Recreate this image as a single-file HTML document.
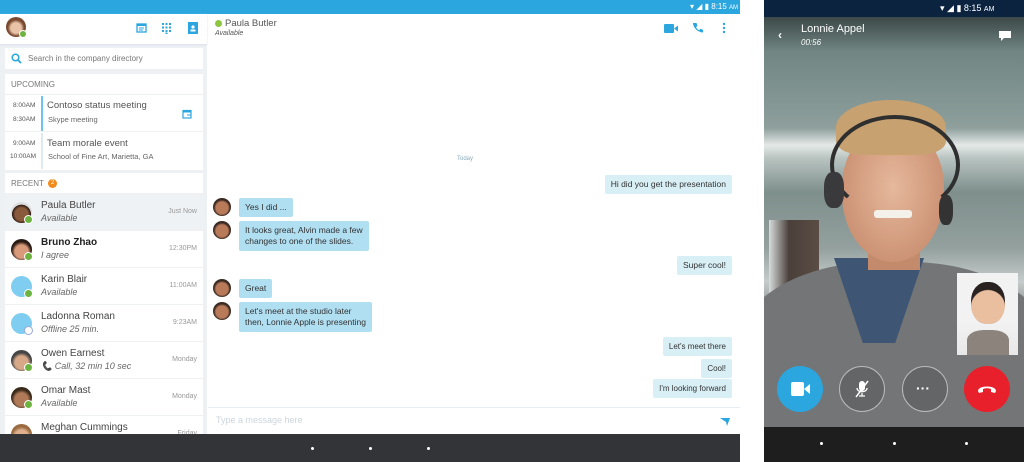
<!DOCTYPE html>
<html><head><meta charset="utf-8"><style>
*{margin:0;padding:0;box-sizing:border-box}
body{width:1024px;height:462px;overflow:hidden;background:#fff;font-family:"Liberation Sans",sans-serif;position:relative;color:#333}
.a{position:absolute}
.t{position:absolute;white-space:nowrap}
.card{position:absolute;left:5px;width:198px;background:#fff}
.row{position:absolute;left:0;width:198px;height:37px;border-top:1px solid #eef0f2}
.av{position:absolute;left:6px;top:8px;width:21px;height:21px;border-radius:50%}
.st{position:absolute;left:19px;top:21px;width:9px;height:9px;border-radius:50%;background:#6cb33f;border:1.5px solid #fff}
.nm{position:absolute;left:36px;top:6px;font-size:10px;color:#444}
.sb{position:absolute;left:36px;top:19px;font-size:9px;color:#666;font-style:italic}
.tm{position:absolute;right:6px;top:14px;font-size:7px;color:#999}
.bl{position:absolute;background:#b1dff2;border-radius:2px;font-size:8.5px;color:#333;padding:4px 6px;line-height:11px}
.br{position:absolute;background:#d9eff6;border-radius:2px;font-size:8.5px;color:#333;padding:4px 6px;line-height:11px;right:292px}
.cav{position:absolute;left:213px;width:18px;height:18px;border-radius:50%;background:radial-gradient(circle at 50% 55%,#b97a5a 0 45%,#3a2a22 60%)}
.dot{position:absolute;width:3px;height:3px;border-radius:50%;background:#fff}
.cb{position:absolute;width:46px;height:46px;border-radius:50%;top:366px}
</style></head><body>
<div class="a" style="left:0;top:0;width:740px;height:14px;background:#2ba6df"></div>
<div class="t" style="left:690px;top:2px;font-size:8px;color:#fff">▾ ◢ ▮ 8:15 <span style="font-size:6px">AM</span></div>
<div class="a" style="left:0;top:14px;width:207px;height:420px;background:#eef1f4"></div>
<div class="a" style="left:0;top:14px;width:207px;height:30px;background:#fff;box-shadow:0 1px 2px #dde"></div>
<div class="a" style="left:6px;top:17px;width:20px;height:20px;border-radius:50%;background:radial-gradient(circle at 50% 55%,#e8c3a8 0 35%,#7a4a30 55%)"></div>
<div class="a" style="left:19px;top:30px;width:8px;height:8px;border-radius:50%;background:#6cb33f;border:1px solid #fff"></div>
<svg class="a" style="left:136px;top:22px" width="11" height="11"><rect x="1" y="2" width="9" height="8" fill="none" stroke="#2ba6df" stroke-width="1.3"/><rect x="1" y="2" width="9" height="2" fill="#2ba6df"/><path d="M3 6h5M3 8h4" stroke="#2ba6df"/></svg>
<svg class="a" style="left:162px;top:23px" width="9" height="11" fill="#2ba6df"><rect x="0" y="0" width="2" height="2"/><rect x="3.5" y="0" width="2" height="2"/><rect x="7" y="0" width="2" height="2"/><rect x="0" y="3.5" width="2" height="2"/><rect x="3.5" y="3.5" width="2" height="2"/><rect x="7" y="3.5" width="2" height="2"/><rect x="0" y="7" width="2" height="2"/><rect x="3.5" y="7" width="2" height="2"/><rect x="7" y="7" width="2" height="2"/><rect x="3.5" y="9.5" width="2" height="1.5"/></svg>
<svg class="a" style="left:188px;top:22px" width="10" height="12"><rect width="10" height="12" fill="#2ba6df"/><circle cx="5" cy="5" r="1.6" fill="#fff"/><rect x="2.5" y="7.5" width="5" height="2" fill="#fff"/></svg>
<div class="card" style="top:48px;height:21px"><svg class="a" style="left:6px;top:5px" width="11" height="11"><circle cx="4.5" cy="4.5" r="3.3" fill="none" stroke="#2ba6df" stroke-width="1.5"/><path d="M7 7l3 3" stroke="#2ba6df" stroke-width="1.8"/></svg><div class="t" style="left:23px;top:6px;font-size:8px;color:#777">Search in the company directory</div></div>
<div class="card" style="top:74px;height:96px">
<div class="t" style="left:6px;top:6px;font-size:8px;color:#777">UPCOMING</div>
<div class="row" style="top:20px;height:37px"><div class="t" style="left:8px;top:7px;font-size:6.5px;color:#555">8:00AM</div><div class="t" style="left:8px;top:21px;font-size:6.5px;color:#555">8:30AM</div><div class="a" style="left:36px;top:1px;width:2px;height:35px;background:#6cc4ec"></div><div class="t" style="left:42px;top:5px;font-size:9.5px;color:#555">Contoso status meeting</div><div class="t" style="left:43px;top:20px;font-size:7.5px;color:#666">Skype meeting</div><svg class="a" style="left:177px;top:14px" width="10" height="10"><rect x="1" y="1.5" width="8" height="7.5" fill="none" stroke="#2ba6df" stroke-width="1.2"/><rect x="1" y="1.5" width="8" height="2" fill="#2ba6df"/><path d="M5 6h4v3" stroke="#2ba6df" fill="none"/></svg></div>
<div class="row" style="top:57px;height:39px"><div class="t" style="left:8px;top:8px;font-size:6.5px;color:#555">9:00AM</div><div class="t" style="left:5px;top:21px;font-size:6.5px;color:#555">10:00AM</div><div class="a" style="left:36px;top:1px;width:2px;height:36px;background:#dfe9f0"></div><div class="t" style="left:42px;top:6px;font-size:9.5px;color:#555">Team morale event</div><div class="t" style="left:43px;top:20px;font-size:7.5px;color:#666">School of Fine Art, Marietta, GA</div></div>
</div>
<div class="card" style="top:173px;height:261px">
<div class="t" style="left:6px;top:6px;font-size:8px;color:#777">RECENT</div><div class="a" style="left:43px;top:6px;width:9px;height:9px;border-radius:50%;background:#f28b1a;color:#fff;font-size:6px;text-align:center;line-height:9px">2</div>
<div class="row" style="top:20px;background:#eef2f5"><div class="av" style="background:radial-gradient(circle at 50% 58%,#8a5a3c 0 40%,#2a1a14 58%,#ddd 60%)"></div><div class="st"></div><div class="nm">Paula Butler</div><div class="sb">Available</div><div class="tm">Just Now</div></div>
<div class="row" style="top:57px"><div class="av" style="background:radial-gradient(circle at 50% 60%,#d99a7a 0 40%,#2a1a14 60%)"></div><div class="st"></div><div class="nm" style="font-weight:bold;color:#222">Bruno Zhao</div><div class="sb">I agree</div><div class="tm">12:30PM</div></div>
<div class="row" style="top:94px"><div class="av" style="background:#7fcdf0"></div><div class="st"></div><div class="nm">Karin Blair</div><div class="sb">Available</div><div class="tm">11:00AM</div></div>
<div class="row" style="top:131px"><div class="av" style="background:#7fcdf0"></div><div class="st" style="background:#fff;border-color:#9ad"></div><div class="nm">Ladonna Roman</div><div class="sb">Offline 25 min.</div><div class="tm">9:23AM</div></div>
<div class="row" style="top:168px"><div class="av" style="background:radial-gradient(circle at 50% 60%,#d6a888 0 40%,#444 60%)"></div><div class="st"></div><div class="nm">Owen Earnest</div><div class="sb">📞 Call, 32 min 10 sec</div><div class="tm">Monday</div></div>
<div class="row" style="top:205px"><div class="av" style="background:radial-gradient(circle at 50% 60%,#b07a58 0 40%,#3a2a1a 60%)"></div><div class="st"></div><div class="nm">Omar Mast</div><div class="sb">Available</div><div class="tm">Monday</div></div>
<div class="row" style="top:242px"><div class="av" style="background:radial-gradient(circle at 50% 60%,#e0b08e 0 40%,#9a6a40 60%)"></div><div class="nm">Meghan Cummings</div><div class="tm">Friday</div></div>
</div>
<div class="a" style="left:208px;top:14px;width:532px;height:30px;background:#fff"></div>
<div class="a" style="left:215px;top:20px;width:7px;height:7px;border-radius:50%;background:#8cc63f"></div>
<div class="t" style="left:225px;top:18px;font-size:9.5px;color:#555">Paula Butler</div>
<div class="t" style="left:215px;top:30px;font-size:7px;color:#555;font-style:italic">Available</div>
<svg class="a" style="left:664px;top:24px" width="14" height="9"><rect x="0" y="0" width="10" height="9" rx="1" fill="#2ba6df"/><path d="M10 4.5l4-3v6z" fill="#2ba6df"/></svg>
<svg class="a" style="left:692px;top:22px" width="11" height="11"><path d="M2 1l2.5 0 1 3-1.5 1c.8 1.6 1.8 2.6 3.3 3.3l1-1.5 3 1V10.5C6 10.5 1 5.5 1 1z" fill="#2ba6df"/></svg>
<svg class="a" style="left:722px;top:22px" width="4" height="12" fill="#2ba6df"><circle cx="2" cy="2" r="1.2"/><circle cx="2" cy="6" r="1.2"/><circle cx="2" cy="10" r="1.2"/></svg>
<div class="t" style="left:457px;top:156px;font-size:6px;color:#8ab">Today</div>
<div class="br" style="top:175px">Hi did you get the presentation</div>
<div class="cav" style="top:198px"></div><div class="bl" style="left:239px;top:198px">Yes I did ...</div>
<div class="cav" style="top:221px"></div><div class="bl" style="left:239px;top:221px">It looks great, Alvin made a few<br>changes to one of the slides.</div>
<div class="br" style="top:256px">Super cool!</div>
<div class="cav" style="top:279px"></div><div class="bl" style="left:239px;top:279px">Great</div>
<div class="cav" style="top:302px"></div><div class="bl" style="left:239px;top:302px">Let's meet at the studio later<br>then, Lonnie Apple is presenting</div>
<div class="br" style="top:337px;font-size:8px">Let's meet there</div>
<div class="br" style="top:359px;font-size:8px">Cool!</div>
<div class="br" style="top:379px;font-size:8px">I'm looking forward</div>
<div class="a" style="left:208px;top:407px;width:532px;height:1px;background:#e6eef4"></div>
<div class="t" style="left:216px;top:415px;font-size:9px;color:#ccd6de">Type a message here</div>
<svg class="a" style="left:720px;top:418px" width="10" height="8"><path d="M0 0h10L7 8 6 4z" fill="#2ba6df"/></svg>
<div class="a" style="left:0;top:434px;width:740px;height:28px;background:#323438"></div>
<div class="dot" style="left:311px;top:447px"></div><div class="dot" style="left:369px;top:447px"></div><div class="dot" style="left:427px;top:447px"></div>
<!-- phone -->
<div class="a" style="left:764px;top:0;width:260px;height:427px;overflow:hidden;background:linear-gradient(180deg,#5f7472 0,#7d918e 20%,#8e9f9c 30%,#e4e9e7 34%,#b9c4c1 37%,#7e8f8c 45%,#93a09e 58%,#c5cccb 66%,#8e9492 72%,#6a6c6e 80%,#5e6062 100%)">
 <div class="a" style="left:0;top:0;width:260px;height:17px;background:#0c2340"></div>
 <div class="t" style="left:176px;top:3px;font-size:9px;color:#fff">▾ ◢ ▮ 8:15 <span style="font-size:7px">AM</span></div>
 <div class="a" style="left:0;top:17px;width:260px;height:34px;background:linear-gradient(#0006,#0000)"></div>
 <div class="a" style="left:5px;top:220px;width:50px;height:100px;background:linear-gradient(90deg,#d8dcdc,#4a3f3a 40%,#5b4d45)"></div>
 <div class="a" style="left:-30px;top:262px;width:320px;height:200px;border-radius:45% 45% 0 0;background:#747577"></div>
 <div class="a" style="left:70px;top:258px;width:90px;height:85px;background:#3e5674;clip-path:polygon(0 0,100% 0,68% 100%,32% 100%)"></div>
 <div class="a" style="left:104px;top:240px;width:52px;height:30px;background:#c48a6c"></div>
 <div class="a" style="left:78px;top:126px;width:102px;height:136px;border-radius:45% 45% 50% 50%;background:radial-gradient(ellipse at 50% 45%,#e6b89c,#c98e70 80%)"></div>
 <div class="a" style="left:72px;top:100px;width:110px;height:55px;border-radius:50% 50% 25% 25%;background:#c8a170"></div>
 <div class="a" style="left:66px;top:115px;width:130px;height:100px;border-radius:50%;border:4px solid #2f2f30;border-bottom-color:transparent;border-left-color:#2f2f30"></div>
 <div class="a" style="left:60px;top:172px;width:20px;height:36px;border-radius:40%;background:#3a3a3c"></div>
 <div class="a" style="left:175px;top:195px;width:14px;height:30px;border-radius:40%;background:#333"></div>
 <div class="a" style="left:110px;top:210px;width:38px;height:8px;border-radius:3px;background:#f4f0ea"></div>
 <div class="t" style="left:37px;top:23px;font-size:11px;color:#fff">Lonnie Appel</div>
 <div class="t" style="left:37px;top:38px;font-size:8px;color:#fff;font-style:italic">00:56</div>
 <div class="t" style="left:14px;top:28px;font-size:12px;color:#fff;font-weight:bold">‹</div>
 <svg class="a" style="left:234px;top:30px" width="14" height="12"><path d="M1 1h12v7H6l-3 3V8H1z" fill="#fff"/></svg>
 <div class="a" style="left:193px;top:273px;width:61px;height:82px;background:linear-gradient(#f2f2f2 0 60%,#e8e8e8)"></div>
 <div class="a" style="left:207px;top:282px;width:34px;height:42px;border-radius:45%;background:radial-gradient(circle at 50% 60%,#e9bfa0 0 55%,#2a2220 58%)"></div>
 <div class="a" style="left:203px;top:330px;width:42px;height:25px;border-radius:40% 40% 0 0;background:#8b837c"></div>
 <div class="cb" style="left:13px;background:#2ba6df"></div>
 <svg class="a" style="left:27px;top:382px" width="19" height="14"><rect width="13" height="14" rx="2" fill="#fff"/><path d="M13 7l6-5v10z" fill="#fff"/></svg>
 <div class="cb" style="left:75px;border:1px solid #bbb;background:#0002"></div>
 <svg class="a" style="left:91px;top:380px" width="14" height="18"><rect x="4" y="1" width="6" height="10" rx="3" fill="#fff"/><path d="M2 8c0 5 10 5 10 0M7 13v3M4 16h6" stroke="#fff" fill="none" stroke-width="1.3"/><path d="M1 17L13 1" stroke="#fff" stroke-width="1.5"/></svg>
 <div class="cb" style="left:138px;border:1px solid #bbb;background:#0002"></div>
 <div class="t" style="left:152px;top:380px;font-size:14px;color:#fff;font-weight:bold">···</div>
 <div class="cb" style="left:200px;background:#e8202b"></div>
 <svg class="a" style="left:213px;top:384px" width="20" height="9"><path d="M1 7c0-6 18-6 18 0l-1 2-4-1v-3c-3-1-5-1-8 0v3l-4 1z" fill="#fff"/></svg>
</div>
<div class="a" style="left:764px;top:427px;width:260px;height:35px;background:#1e1e1e"></div>
<div class="dot" style="left:820px;top:442px"></div><div class="dot" style="left:893px;top:442px"></div><div class="dot" style="left:965px;top:442px"></div>
</body></html>
